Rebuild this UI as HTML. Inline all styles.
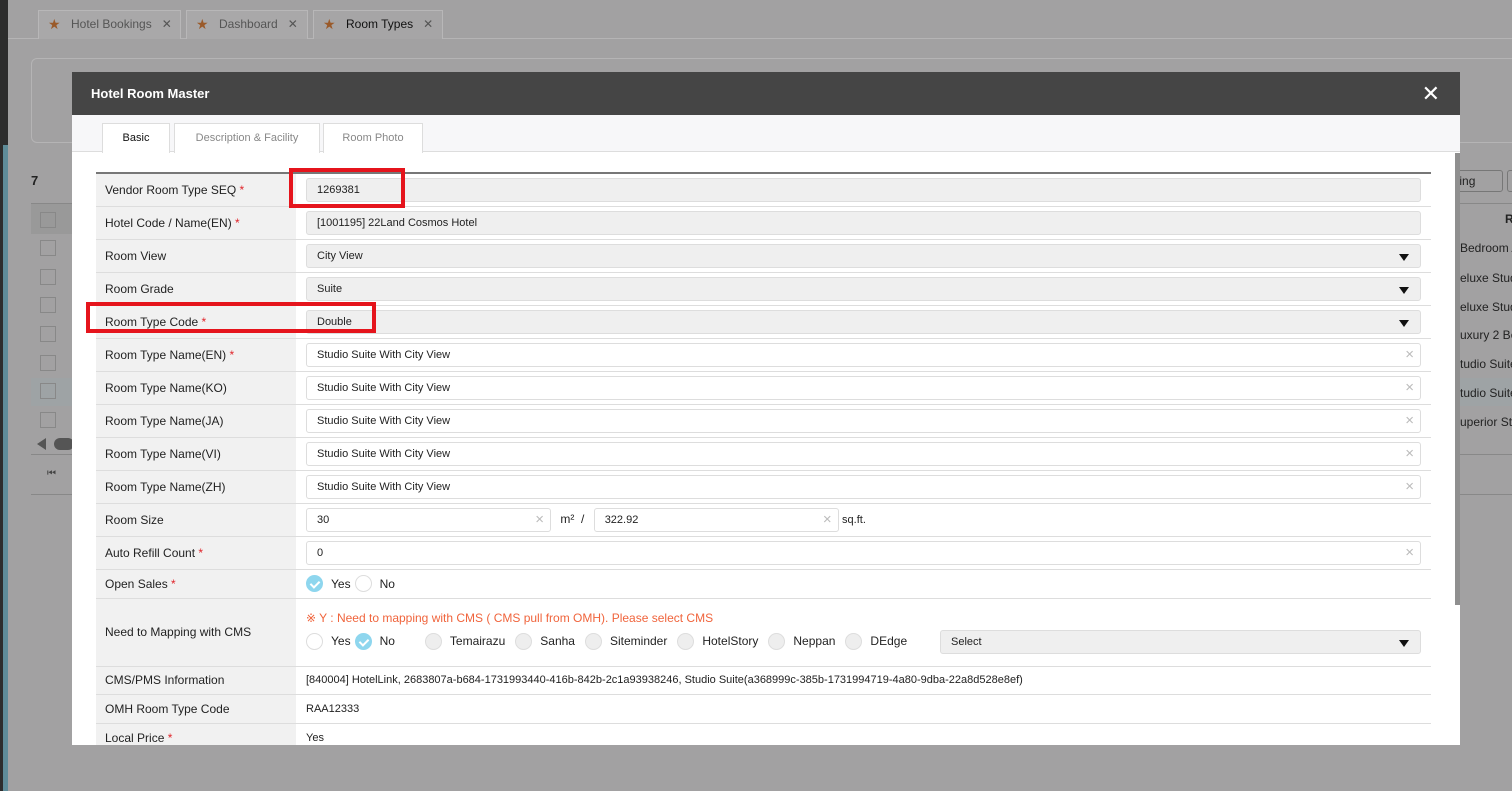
<!DOCTYPE html>
<html><head><meta charset="utf-8"><style>
*{box-sizing:border-box;margin:0;padding:0}
body{width:1512px;height:791px;overflow:hidden;background:#a2a1a2;font-family:"Liberation Sans",sans-serif;font-size:12px;color:#222;position:relative}
.abs{position:absolute;white-space:nowrap}
.tab{position:absolute;top:10px;height:29px;background:#a9a8a9;border:1px solid #b8b7b8;border-bottom:none;font-size:12px;color:#555;line-height:27px;padding-left:32px}
.tab .st{position:absolute;left:9px;top:0;color:#9a5a2a;font-size:14px}
.tab .x{margin-left:10px;color:#555}
.modal{position:absolute;left:72px;top:72px;width:1388px;height:673px;background:#fff;overflow:hidden}
.mh{height:43px;background:#454545;color:#fff;font-weight:bold;font-size:13px;line-height:43px;padding-left:19px;position:relative}
.mh .cl{position:absolute;right:20px;top:0;font-size:22px;font-weight:normal}
.tabs{height:37px;background:#f7f7f9;border-bottom:1px solid #ddd;position:relative}
.mt{position:absolute;top:8px;height:30px;border:1px solid #ddd;border-bottom:none;background:#fff;font-size:11px;color:#888;text-align:center;line-height:28px}
table{position:absolute;left:24px;top:100px;width:1335px;border-collapse:collapse;border-top:2px solid #777}
td{border-bottom:1px solid #ddd;height:33px;vertical-align:middle}
td.l{width:200px;background:#f1f1f1;padding-left:9px;font-size:12px;color:#222}
td.v{padding-left:10px;padding-right:10px}
.r{color:#e0242a}
.in{height:24px;border:1px solid #ddd;border-radius:3px;padding-left:10px;line-height:22px;font-size:11px;position:relative;background:#fff}
.ro{background:#efefef}
.sel{background:#efefef}
.sel:after{content:"";position:absolute;right:11px;top:9px;border-left:5px solid transparent;border-right:5px solid transparent;border-top:7px solid #111}
.clr:after{content:"×";position:absolute;right:6px;top:0;color:#bbb;font-size:15px}
.rad{display:inline-block;width:17px;height:17px;border-radius:50%;border:1px solid #ddd;vertical-align:middle;background:#fff;position:relative}
.rad.g{background:#eee}
.rad.on{background:#8ed6ee;border-color:#8ed6ee}
.rad.on:after{content:"";position:absolute;left:5px;top:3px;width:4px;height:7px;border:solid #fff;border-width:0 2px 2px 0;transform:rotate(45deg)}
.ri{display:inline-block;vertical-align:middle;margin:0 14px 0 8px}
.redbox{position:absolute;border:4px solid #e5141c}
</style></head><body>
<div class="abs" style="left:0;top:0;width:8px;height:791px;background:#2d2d2d"></div>
<div class="abs" style="left:3px;top:145px;width:5px;height:646px;background:#5f8c99"></div>
<div class="abs" style="left:8px;top:38px;width:1504px;height:1px;background:#b5b4b5"></div>
<div class="tab" style="left:38px;width:143px"><span class="st">★</span>Hotel Bookings<span class="x">✕</span></div>
<div class="tab" style="left:186px;width:122px"><span class="st">★</span>Dashboard<span class="x">✕</span></div>
<div class="tab" style="left:313px;width:130px;background:#a6a5a6;color:#111"><span class="st">★</span>Room Types<span class="x">✕</span></div>
<div class="abs" style="left:31px;top:58px;width:1500px;height:85px;border:1px solid #b5b4b5;border-radius:6px"></div>
<div class="abs" style="left:31px;top:173px;font-weight:bold;font-size:13px">7</div>
<div class="abs" style="left:31px;top:203px;width:1500px;height:1px;background:#888"></div>
<div class="abs" style="left:31px;top:204px;width:42px;height:30px;background:#999"></div>
<div class="abs" style="left:1435px;top:170px;width:68px;height:22px;border:1px solid #777;border-radius:3px;font-size:12px;line-height:20px;padding-left:10px">pping</div>
<div class="abs" style="left:1507px;top:170px;width:10px;height:22px;border:1px solid #777;border-radius:3px"></div>
<div class="abs" style="left:1460px;top:241px;font-size:12px">Bedroom A</div>
<div class="abs" style="left:1460px;top:271px;font-size:12px">eluxe Studi</div>
<div class="abs" style="left:1460px;top:300px;font-size:12px">eluxe Studi</div>
<div class="abs" style="left:1460px;top:328px;font-size:12px">uxury 2 Bec</div>
<div class="abs" style="left:1460px;top:357px;font-size:12px">tudio Suite</div>
<div class="abs" style="left:1460px;top:378px;width:52px;height:28px;background:#9ea3a5"></div>
<div class="abs" style="left:1460px;top:386px;font-size:12px">tudio Suite</div>
<div class="abs" style="left:1460px;top:415px;font-size:12px">uperior Stu</div>
<div class="abs" style="left:1505px;top:212px;font-weight:bold;font-size:12px">R</div>
<div class="abs" style="left:31px;top:378px;width:42px;height:28px;background:#9ea3a5"></div>
<div class="abs" style="left:40px;top:212px;width:16px;height:16px;border:1px solid #888"></div>
<div class="abs" style="left:40px;top:240px;width:16px;height:16px;border:1px solid #888"></div>
<div class="abs" style="left:40px;top:269px;width:16px;height:16px;border:1px solid #888"></div>
<div class="abs" style="left:40px;top:297px;width:16px;height:16px;border:1px solid #888"></div>
<div class="abs" style="left:40px;top:326px;width:16px;height:16px;border:1px solid #888"></div>
<div class="abs" style="left:40px;top:355px;width:16px;height:16px;border:1px solid #888"></div>
<div class="abs" style="left:40px;top:383px;width:16px;height:16px;border:1px solid #888"></div>
<div class="abs" style="left:40px;top:412px;width:16px;height:16px;border:1px solid #888"></div>
<div class="abs" style="left:37px;top:438px;border-top:6px solid transparent;border-bottom:6px solid transparent;border-right:9px solid #555"></div>
<div class="abs" style="left:54px;top:438px;width:20px;height:12px;border-radius:6px;background:#555"></div>
<div class="abs" style="left:31px;top:454px;width:1500px;height:1px;background:#888"></div>
<div class="abs" style="left:31px;top:494px;width:1500px;height:1px;background:#888"></div>
<div class="abs" style="left:47px;top:468px;font-size:10px;color:#444">⏮</div>

<div class="modal">
<div class="mh">Hotel Room Master<span class="cl">✕</span></div>
<div class="tabs">
<div class="mt" style="left:30px;width:68px;color:#111">Basic</div>
<div class="mt" style="left:102px;width:146px">Description &amp; Facility</div>
<div class="mt" style="left:251px;width:100px">Room Photo</div>
</div>
<div class="abs" style="left:1383px;top:81px;width:5px;height:452px;background:#8f8f8f"></div>
<table>
<tr><td class="l">Vendor Room Type SEQ <span class="r">*</span></td><td class="v"><div class="in ro">1269381</div></td></tr>
<tr><td class="l">Hotel Code / Name(EN) <span class="r">*</span></td><td class="v"><div class="in ro">[1001195] 22Land Cosmos Hotel</div></td></tr>
<tr><td class="l">Room View</td><td class="v"><div class="in sel">City View</div></td></tr>
<tr><td class="l">Room Grade</td><td class="v"><div class="in sel">Suite</div></td></tr>
<tr><td class="l">Room Type Code <span class="r">*</span></td><td class="v"><div class="in sel">Double</div></td></tr>
<tr><td class="l">Room Type Name(EN) <span class="r">*</span></td><td class="v"><div class="in clr">Studio Suite With City View</div></td></tr>
<tr><td class="l">Room Type Name(KO)</td><td class="v"><div class="in clr">Studio Suite With City View</div></td></tr>
<tr><td class="l">Room Type Name(JA)</td><td class="v"><div class="in clr">Studio Suite With City View</div></td></tr>
<tr><td class="l">Room Type Name(VI)</td><td class="v"><div class="in clr">Studio Suite With City View</div></td></tr>
<tr><td class="l">Room Type Name(ZH)</td><td class="v"><div class="in clr">Studio Suite With City View</div></td></tr>
<tr><td class="l">Room Size</td><td class="v"><div class="in clr" style="display:inline-block;width:245px;vertical-align:middle">30</div> <span style="margin:0 6px">m²&nbsp; /</span> <div class="in clr" style="display:inline-block;width:245px;vertical-align:middle">322.92</div> <span style="font-size:11px">sq.ft.</span></td></tr>
<tr><td class="l">Auto Refill Count <span class="r">*</span></td><td class="v"><div class="in clr">0</div></td></tr>
<tr><td class="l" style="height:29px">Open Sales <span class="r">*</span></td><td class="v" style="height:29px"><span class="rad on"></span><span class="ri">Yes</span><span class="rad" style="margin-left:-10px"></span><span class="ri">No</span></td></tr>
<tr><td class="l" style="height:68px">Need to Mapping with CMS</td><td class="v" style="height:68px"><div style="color:#f0643c;margin-bottom:8px;margin-top:-4px">※ Y : Need to mapping with CMS ( CMS pull from OMH). Please select CMS</div>
<div style="position:relative"><span class="rad"></span><span class="ri">Yes</span><span class="rad on" style="margin-left:-10px"></span><span class="ri" style="margin-right:30px">No</span><span class="rad g"></span><span class="ri">Temairazu</span><span class="rad g" style="margin-left:-4px"></span><span class="ri">Sanha</span><span class="rad g" style="margin-left:-4px"></span><span class="ri">Siteminder</span><span class="rad g" style="margin-left:-4px"></span><span class="ri">HotelStory</span><span class="rad g" style="margin-left:-4px"></span><span class="ri">Neppan</span><span class="rad g" style="margin-left:-4px"></span><span class="ri">DEdge</span>
<div class="in sel" style="position:absolute;left:634px;right:0;top:-3px">Select</div></div></td></tr>
<tr><td class="l" style="height:28px">CMS/PMS Information</td><td class="v" style="font-size:11px;height:28px">[840004] HotelLink, 2683807a-b684-1731993440-416b-842b-2c1a93938246, Studio Suite(a368999c-385b-1731994719-4a80-9dba-22a8d528e8ef)</td></tr>
<tr><td class="l" style="height:29px">OMH Room Type Code</td><td class="v" style="font-size:11px;height:29px">RAA12333</td></tr>
<tr><td class="l" style="height:29px">Local Price <span class="r">*</span></td><td class="v" style="font-size:11px;height:29px">Yes</td></tr>
</table>
</div>
<div class="redbox" style="left:289px;top:168px;width:116px;height:40px"></div>
<div class="redbox" style="left:86px;top:302px;width:290px;height:31px"></div>
</body></html>
